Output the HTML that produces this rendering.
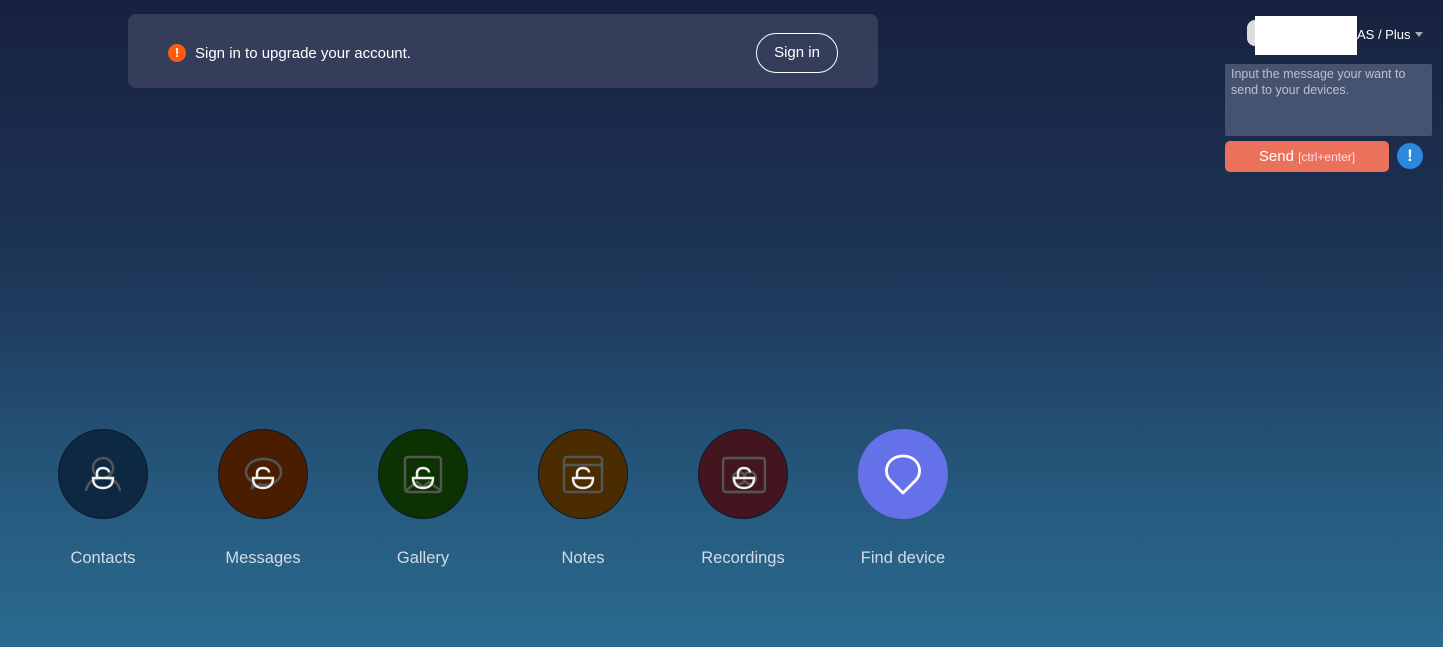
<!DOCTYPE html>
<html><head><style>
body{margin:0;width:1443px;height:647px;overflow:hidden;background:linear-gradient(180deg,#18213f 0%,#1d3456 40%,#25587c 75%,#2a6b8f 100%);font-family:"Liberation Sans",sans-serif;position:relative}
.banner{position:absolute;left:128px;top:14px;width:750px;height:74px;background:#343e5b;border-radius:8px}
.banner .ic{position:absolute;left:40px;top:30px;width:18px;height:18px;border-radius:50%;background:#fc5b10;color:#fff;font-size:13px;font-weight:bold;text-align:center;line-height:18px}
.banner .t{position:absolute;left:67px;top:31px;color:#fff;font-size:15px}
.banner .b{position:absolute;left:628px;top:19px;width:82px;height:40px;border:1px solid #fff;border-radius:20px;color:#fff;font-size:15px;text-align:center;line-height:38px;box-sizing:border-box}
.item{position:absolute;top:429px;width:90px;text-align:center}
.c{width:88px;height:88px;border-radius:50%;border:1px solid #0c1a2a;position:relative}
.lbl{position:absolute;top:120px;left:-30px;width:150px;color:#d3dce6;font-size:16.5px;text-align:center}
svg{position:absolute;left:23px;top:23px}
</style></head><body>
<div class="banner"><div class="ic">!</div><div class="t">Sign in to upgrade your account.</div><div class="b">Sign in</div></div>

<div style="position:absolute;left:1247px;top:20px;width:16px;height:26px;border-radius:8px;background:#ddd"></div>
<div style="position:absolute;left:1255px;top:16px;width:102px;height:39px;background:#fff"></div>
<div style="position:absolute;left:1357px;top:27px;color:#fff;font-size:13px">AS / Plus</div>
<div style="position:absolute;left:1415px;top:32px;border:4px solid transparent;border-top:5px solid #aab;"></div>
<div style="position:absolute;left:1225px;top:64px;width:207px;height:72px;background:#455370;border-radius:2px;color:#b8c0cc;font-size:12.5px;line-height:16px;padding:2px 6px;box-sizing:border-box">Input the message your want to send to your devices.</div>
<div style="position:absolute;left:1225px;top:141px;width:164px;height:31px;background:#ec715a;border-radius:5px;color:#fff;text-align:center;line-height:31px;font-size:15px">Send <span style="font-size:12px;color:#fde">[ctrl+enter]</span></div>
<div style="position:absolute;left:1397px;top:143px;width:26px;height:26px;border-radius:50%;background:#2b8ae0;color:#fff;font-weight:bold;text-align:center;line-height:26px;font-size:17px">!</div>

<div class="item" style="left:58px"><div class="c" style="background:#0d2841"><svg width="42" height="42" viewBox="0 0 42 42" fill="none" stroke-width="2.5"><circle cx="21" cy="15" r="10" stroke="#555"/><path d="M4 38c1-8 7-13 17-13s16 5 17 13" stroke="#555"/><path d="M11 25h20c0 7-4 10-10 10s-10-3-10-10zM15 25v-5c0-3 2.5-5 6-5s6 2 6 4.5" stroke="#eee"/></svg></div><div class="lbl">Contacts</div></div>
<div class="item" style="left:218px"><div class="c" style="background:#4b1d00"><svg width="42" height="42" viewBox="0 0 42 42" fill="none" stroke-width="2.5"><path d="M22 6c10 0 17 6 17 13s-7 13-17 13c-2 0-3 0-4-1l-8 4 1-6c-4-2-7-6-7-10 0-7 7-13 18-13z" stroke="#555"/><path d="M11 25h20c0 7-4 10-10 10s-10-3-10-10zM15 25v-5c0-3 2.5-5 6-5s6 2 6 4.5" stroke="#eee"/></svg></div><div class="lbl">Messages</div></div>
<div class="item" style="left:378px"><div class="c" style="background:#0b3200"><svg width="42" height="42" viewBox="0 0 42 42" fill="none" stroke-width="2.5"><rect x="3" y="4" width="36" height="35" rx="3" stroke="#555"/><path d="M3 38l12-9 6 5 6-5 12 9" stroke="#555"/><path d="M11 25h20c0 7-4 10-10 10s-10-3-10-10zM15 25v-5c0-3 2.5-5 6-5s6 2 6 4.5" stroke="#eee"/></svg></div><div class="lbl">Gallery</div></div>
<div class="item" style="left:538px"><div class="c" style="background:#4a2c00"><svg width="42" height="42" viewBox="0 0 42 42" fill="none" stroke-width="2.5"><rect x="2" y="4" width="38" height="35" rx="3" stroke="#555"/><path d="M2 12h38" stroke="#555"/><path d="M11 25h20c0 7-4 10-10 10s-10-3-10-10zM15 25v-5c0-3 2.5-5 6-5s6 2 6 4.5" stroke="#eee"/></svg></div><div class="lbl">Notes</div></div>
<div class="item" style="left:698px"><div class="c" style="background:#43161f"><svg width="44" height="42" viewBox="0 0 44 42" fill="none" stroke-width="2.5"><rect x="1" y="5" width="42" height="34" rx="3" stroke="#555"/><circle cx="17" cy="25" r="6" stroke="#555"/><circle cx="28" cy="25" r="6" stroke="#555"/><path d="M12 25h20c0 7-4 10-10 10s-10-3-10-10zM16 25v-5c0-3 2.5-5 6-5s6 2 6 4.5" stroke="#eee"/></svg></div><div class="lbl">Recordings</div></div>
<div class="item" style="left:858px"><div class="c" style="background:#6571e8;border-color:#6571e8"><svg width="42" height="46" viewBox="0 0 42 46" fill="none" stroke-width="2.8" style="top:21px"><path d="M21 42L8 29C0 20 6 5 21 5s21 15 13 24z" stroke="#fff" stroke-linejoin="round"/></svg></div><div class="lbl">Find device</div></div>
</body></html>
